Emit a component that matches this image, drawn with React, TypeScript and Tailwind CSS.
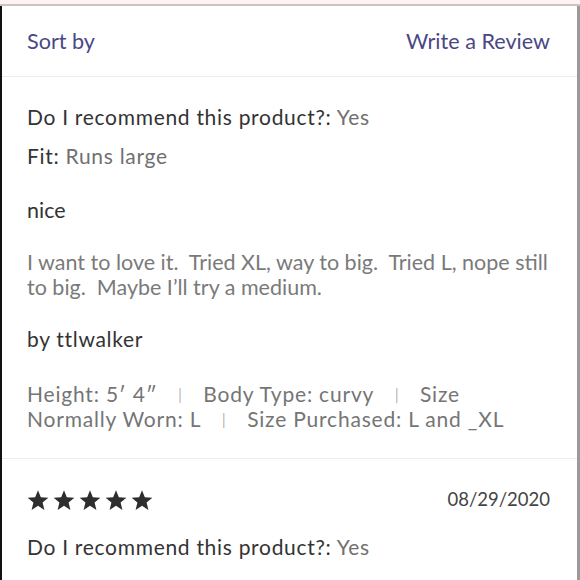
import React from "react";

const opt = { fontFamily: "Lato, 'Noto Sans', sans-serif", letterSpacing: "0.7px" };

function Star() {
  return (
    <svg width="22" height="22" viewBox="0 0 24 23" className="block">
      <path
        d="M12 0.8l3.1 7.6 8.2 0.6-6.3 5.3 2 8-7-4.4-7 4.4 2-8L0.7 9l8.2-0.6z"
        fill="#2e2e2e"
      />
    </svg>
  );
}

function Sep() {
  return <span className="text-[#9a9a9a] px-[20px] inline-block scale-y-75 font-light">|</span>;
}

export default function App() {
  return (
    <div className="w-[580px] h-[580px] overflow-hidden bg-white" style={{ fontFamily: "Lato, sans-serif" }}>
      <div className="h-[4px] bg-[#fdf4f1]" />
      <div className="h-[2px] bg-[#c9c5c3]" />
      <div className="flex h-[574px]">
        <div className="w-[2px] bg-[#111]" />
        <div className="flex-1 flex flex-col">
          <div className="flex items-center justify-between pl-[25px] pr-[27px] h-[71px] border-b border-[#ececec] text-[21.6px] text-[#4b4784]">
            <span>Sort by</span>
            <span>Write a Review</span>
          </div>
          <div className="pl-[25px] pr-[27px] pt-[27px] pb-[27px] border-b border-[#ececec]">
            <div className="text-[21px] leading-[26px] text-[#333]" style={opt}>
              Do I recommend this product?: <span className="text-[#707070]">Yes</span>
            </div>
            <div className="mt-[13px] text-[21px] leading-[26px] text-[#333]" style={opt}>
              Fit: <span className="text-[#707070]">Runs large</span>
            </div>
            <div className="mt-[28px] text-[21.5px] leading-[26px] text-[#333]">nice</div>
            <div className="mt-[27px] text-[21.5px] leading-[25px] text-[#7a7a7a]">
              I want to love it.&nbsp; Tried XL, way to big.&nbsp; Tried L, nope still to big.&nbsp; Maybe I’ll try a medium.
            </div>
            <div className="mt-[26px] text-[21px] leading-[26px] text-[#333]" style={opt}>
              by ttlwalker
            </div>
            <div className="mt-[29px] text-[21px] leading-[25px] text-[#757575]" style={{ ...opt, letterSpacing: "0.8px" }}>
              Height: 5′ 4″<Sep />Body Type: curvy<Sep />Size
              <br />
              Normally Worn: L<Sep />Size Purchased: L and _XL
            </div>
          </div>
          <div className="pl-[25px] pr-[27px] pt-[27px]">
            <div className="flex items-center justify-between">
              <div className="flex gap-[4px]">
                <Star />
                <Star />
                <Star />
                <Star />
                <Star />
              </div>
              <span className="text-[18.5px] text-[#444]">08/29/2020</span>
            </div>
            <div className="mt-[20px] text-[21px] leading-[26px] text-[#333]" style={opt}>
              Do I recommend this product?: <span className="text-[#707070]">Yes</span>
            </div>
          </div>
        </div>
        <div className="w-[3px] bg-[#9a9a9a]" />
      </div>
    </div>
  );
}
